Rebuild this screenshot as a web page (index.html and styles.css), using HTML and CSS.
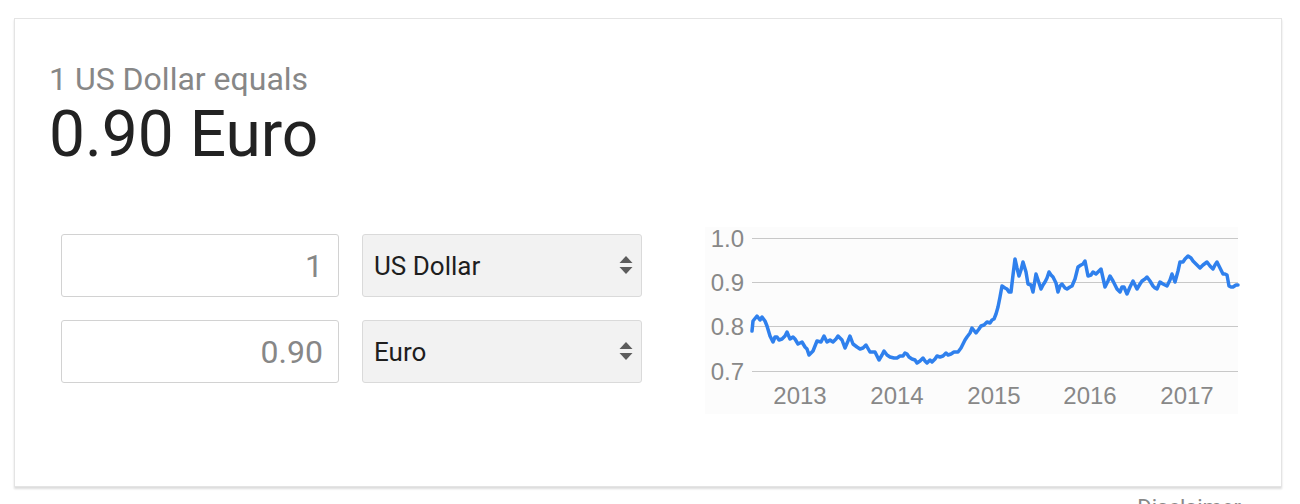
FILE: index.html
```html
<!DOCTYPE html>
<html lang="en">
<head>
  <meta charset="UTF-8">
  <meta name="viewport" content="width=device-width, initial-scale=1.0">
  <title>Currency converter</title>
  <link rel="stylesheet" href="styles.css">
</head>
<body>
  <div class="card">
    <p class="rate-label">1 US Dollar equals</p>
    <p class="rate-value">0.90 Euro</p>

    <div class="converter">
      <div class="fields">
        <input class="amount" type="text" value="1">
        <div class="currency">
          <span>US Dollar</span>
          <svg class="arrows" width="14" height="20" viewBox="0 0 14 20"><polygon points="0.5,7 7,0 13.5,7"/><polygon points="0.5,11 13.5,11 7,18"/></svg>
        </div>
        <input class="amount" type="text" value="0.90">
        <div class="currency">
          <span>Euro</span>
          <svg class="arrows" width="14" height="20" viewBox="0 0 14 20"><polygon points="0.5,7 7,0 13.5,7"/><polygon points="0.5,11 13.5,11 7,18"/></svg>
        </div>
      </div>

      <svg class="chart" width="540" height="190" viewBox="0 0 540 190">
        <rect x="5" y="2" width="533" height="187" fill="#fcfcfc"/>
        <g class="grid">
          <line x1="52" y1="13.5" x2="538" y2="13.5"/>
          <line x1="52" y1="57.5" x2="538" y2="57.5"/>
          <line x1="52" y1="101.5" x2="538" y2="101.5"/>
          <line x1="52" y1="146.5" x2="538" y2="146.5"/>
        </g>
        <g class="axis" text-anchor="end">
          <text x="44" y="22">1.0</text>
          <text x="44" y="66">0.9</text>
          <text x="44" y="110">0.8</text>
          <text x="44" y="155">0.7</text>
        </g>
        <g class="axis" text-anchor="middle">
          <text x="100" y="179">2013</text>
          <text x="197" y="179">2014</text>
          <text x="294" y="179">2015</text>
          <text x="390" y="179">2016</text>
          <text x="487" y="179">2017</text>
        </g>
        <polyline class="series" points="52,106 53,96 57,91 60,95 62,92 65,96 67,101 70,111 73,117 75,112 77,112 79,115 82,114 85,111 87,107 90,114 93,112 95,114 98,119 102,117 105,122 107,124 109,130 113,126 115,121 117,116 121,117 124,111 127,117 130,115 133,117 136,114 138,111 142,115 145,123 148,116 150,111 153,119 157,122 160,124 163,123 166,120 170,127 175,127 177,131 179,135 182,130 184,126 187,130 190,132 194,133 197,133 200,131 203,131 205,128 207,129 209,132 212,134 215,135 217,138 220,136 223,133 225,136 227,138 230,135 232,137 235,134 237,131 240,132 243,131 246,128 248,130 251,129 254,127 258,127 261,123 263,119 265,115 267,112 270,108 272,103 276,108 279,104 281,101 284,100 287,97 290,98 292,95 294,94 296,89 298,82 300,72 302,61 305,63 307,64 309,67 311,67 313,50 315,34 317,43 319,51 321,45 323,37 326,47 328,59 331,60 333,67 336,49 339,58 341,64 343,60 345,57 347,53 349,47 351,50 353,52 356,58 358,67 360,61 362,59 365,63 367,64 370,62 372,61 375,54 378,42 381,40 383,39 385,36 388,51 391,50 393,47 396,49 398,47 401,44 403,53 405,62 408,56 410,51 413,56 415,60 417,64 420,67 422,62 424,62 427,69 430,62 433,56 435,60 437,64 440,59 442,56 445,54 447,52 450,56 453,61 455,63 457,64 460,57 463,59 465,60 467,61 470,55 472,49 475,57 478,46 480,37 483,37 485,34 488,31 491,33 493,36 496,39 498,41 500,43 503,40 507,37 510,41 513,44 515,40 517,37 520,43 523,49 525,49 527,50 529,61 531,62 533,62 536,60 538,60"/>
      </svg>
    </div>
  </div>

  <p class="footer">Disclaimer</p>
</body>
</html>
```

FILE: styles.css
```css
body {
  margin: 0;
  font-family: 'Roboto', 'Liberation Sans', sans-serif;
  background-color: #fff;
  color: #222;
}

.card {
  box-sizing: border-box;
  height: 469px;
  margin: 18px 18px 0 14px;
  padding: 40px 34px 0;
  border: 1px solid #e4e4e4;
  box-shadow: 0 2px 2px rgba(0, 0, 0, 0.14);
}

.rate-label {
  margin: 0;
  font-size: 32px;
  line-height: 40px;
  color: #878787;
}

.rate-value {
  margin: 0;
  font-size: 64px;
  line-height: 72px;
  color: #222;
}

.converter {
  display: flex;
  align-items: flex-start;
  margin: 54px 0 0 12px;
}

.fields {
  display: grid;
  grid-template-columns: 278px 280px;
  grid-auto-rows: 63px;
  gap: 23px;
  margin-top: 9px;
}

.amount {
  box-sizing: border-box;
  width: 100%;
  height: 63px;
  margin: 0;
  padding: 0 15px;
  border: 1px solid #d2d2d2;
  border-radius: 3px;
  font-family: inherit;
  font-size: 32px;
  color: #878787;
  text-align: right;
  background-color: #fff;
  outline: none;
}

.currency {
  display: flex;
  align-items: center;
  justify-content: space-between;
  box-sizing: border-box;
  height: 63px;
  padding: 0 8px 0 11px;
  border: 1px solid #dadada;
  border-radius: 3px;
  background-color: #f2f2f2;
  font-size: 26px;
  color: #1e1e1e;
}

.arrows {
  display: block;
  fill: #5c5c5c;
}

.chart {
  display: block;
  margin-left: 58px;
}

.grid line {
  stroke: #c8c8c8;
  stroke-width: 1;
}

.axis text {
  font-family: 'Liberation Sans', Arial, sans-serif;
  font-size: 24px;
  fill: #888;
}

.series {
  fill: none;
  stroke: #2f80ed;
  stroke-width: 3.5;
  stroke-linejoin: round;
  stroke-linecap: round;
}

.footer {
  margin: 8px 0 0;
  padding-right: 59px;
  text-align: right;
  font-size: 22px;
  line-height: 26px;
  color: #888;
}
```
